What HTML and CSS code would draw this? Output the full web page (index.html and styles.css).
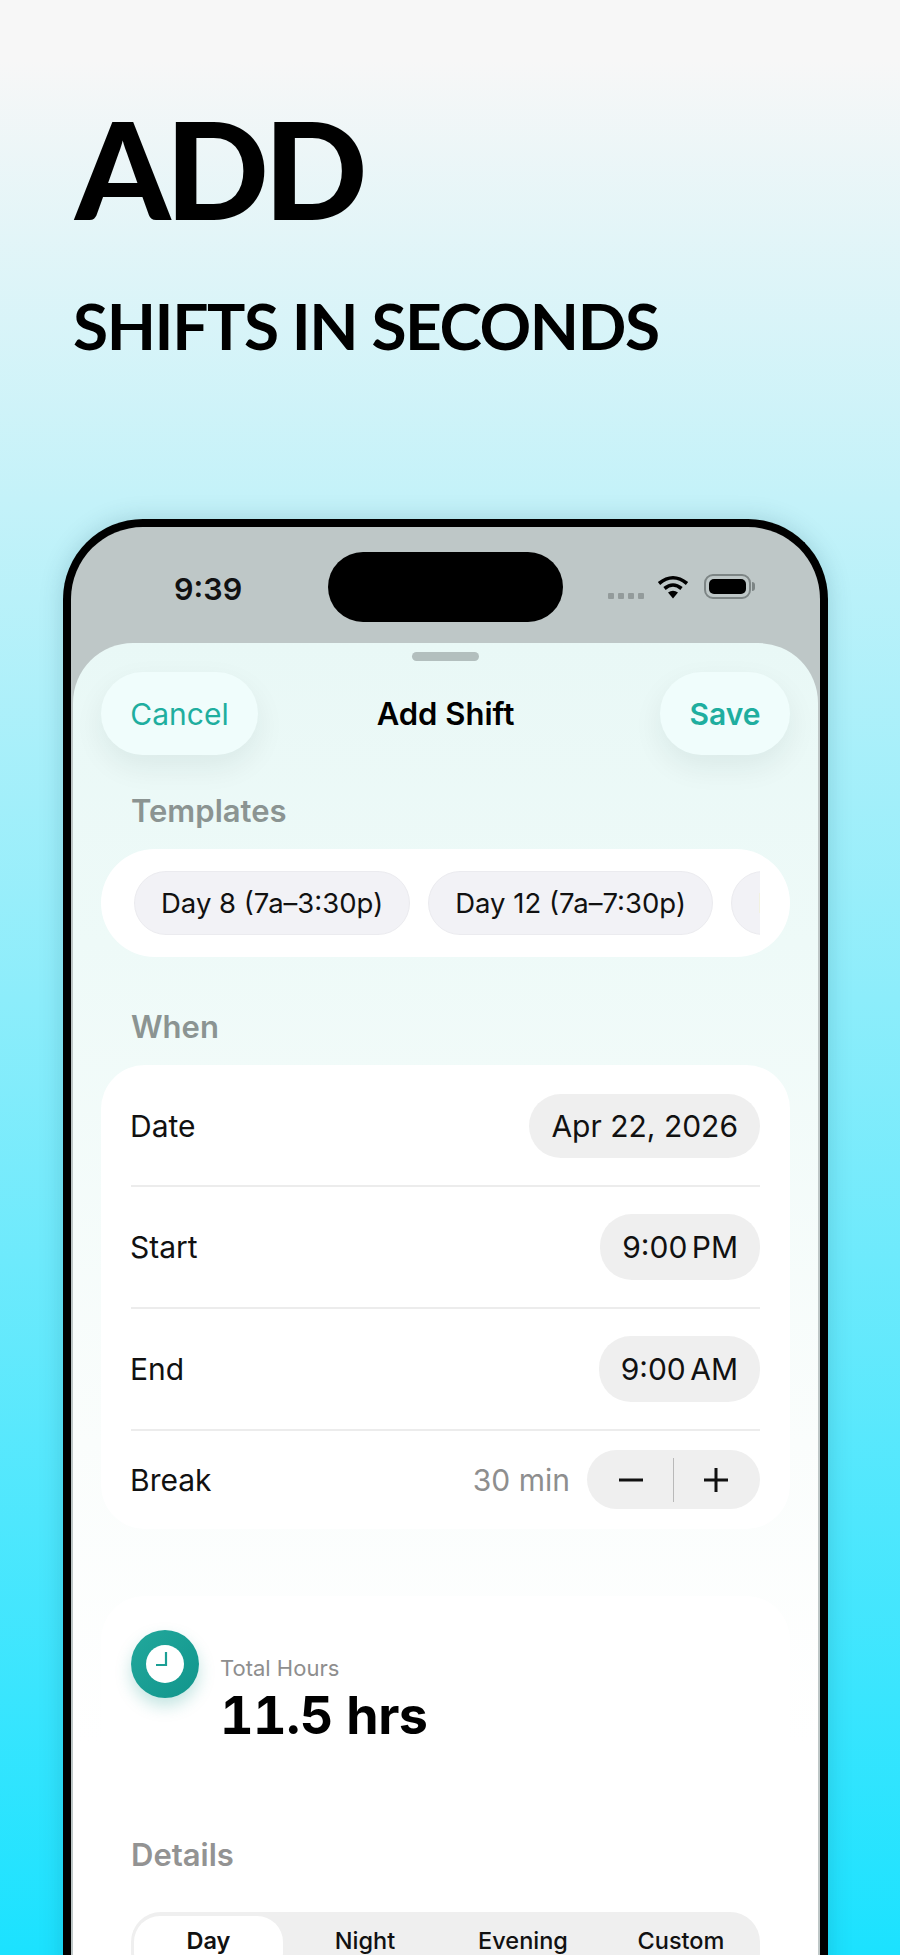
FILE: index.html
```html
<!DOCTYPE html>
<html lang="en">
<head>
  <meta charset="UTF-8" />
  <title>Add shifts in seconds</title>
  <link rel="stylesheet" href="styles.css">
</head>
<body>

  <header class="hero">
    <h1>ADD</h1>
    <h2>SHIFTS IN SECONDS</h2>
  </header>

  <div class="phone">
    <div class="status">
      <span class="time">9:39</span>
      <div class="island"></div>
      <div class="status-icons">
        <div class="dots"><i></i><i></i><i></i><i></i></div>
        <svg class="wifi" width="32" height="24" viewBox="0 0 32 24">
          <path d="M2 8.5 Q16 -3 30 8.5" fill="none" stroke="#000" stroke-width="3.6" />
          <path d="M7.5 13.5 Q16 6.5 24.5 13.5" fill="none" stroke="#000" stroke-width="3.6" />
          <path d="M11 17.6 Q16 14 21 17.6 L16 23.5 Z" fill="#000" />
        </svg>
        <div class="battery"><div class="battery-fill"></div></div>
      </div>
    </div>

    <div class="sheet">
      <div class="handle"></div>

      <nav class="nav">
        <button class="nav-btn cancel">Cancel</button>
        <div class="nav-title">Add Shift</div>
        <button class="nav-btn save">Save</button>
      </nav>

      <div class="section-label first">Templates</div>
      <div class="card templates">
        <div class="chips">
          <span class="chip">Day 8 (7a–3:30p)</span>
          <span class="chip">Day 12 (7a–7:30p)</span>
          <span class="chip">Night 12 (7p–7:30a)</span>
        </div>
      </div>

      <div class="section-label">When</div>
      <div class="card when">
        <div class="row">
          <span class="row-name">Date</span>
          <span class="pill">Apr 22, 2026</span>
        </div>
        <div class="row">
          <span class="row-name">Start</span>
          <span class="pill tall">9:00 PM</span>
        </div>
        <div class="row">
          <span class="row-name">End</span>
          <span class="pill tall">9:00 AM</span>
        </div>
        <div class="row last">
          <span class="row-name">Break</span>
          <div class="break-right">
            <span class="muted">30 min</span>
            <div class="stepper">
              <svg width="24" height="24" viewBox="0 0 24 24"><path d="M0 12H24" stroke="#111" stroke-width="3" /></svg>
              <div class="stepper-line"></div>
              <svg width="24" height="24" viewBox="0 0 24 24"><path d="M0 12H24M12 0V24" stroke="#111" stroke-width="3" /></svg>
            </div>
          </div>
        </div>
      </div>

      <div class="card total">
        <div class="clock">
          <svg width="38" height="38" viewBox="0 0 38 38">
            <circle cx="19" cy="19" r="19" fill="#fff" />
            <path d="M20 7V20H10" fill="none" stroke="#1b9f95" stroke-width="2.2" />
          </svg>
        </div>
        <div class="total-text">
          <div class="total-label">Total Hours</div>
          <div class="total-value">11.5 hrs</div>
        </div>
      </div>

      <div class="section-label details">Details</div>
      <div class="segments">
        <span class="segment active">Day</span>
        <span class="segment">Night</span>
        <span class="segment">Evening</span>
        <span class="segment">Custom</span>
      </div>
    </div>
  </div>

</body>
</html>
```

FILE: styles.css
```css
* {
  box-sizing: border-box;
}
html, body {
  margin: 0;
  height: 1955px;
  overflow: hidden;
}
body {
  font-family: Inter, "Noto Sans", sans-serif;
  color: #111;
  background: linear-gradient(180deg, #f7f7f7 0, #f7f7f7 60px, #c4f2f9 500px, #8cedfb 1000px, #1be2ff 1955px);
}

/* hero text */
.hero {
  font-family: Lato, sans-serif;
  color: #000;
  height: 519px;
  padding: 100px 0 0 73px;
}
.hero h1 {
  margin: 0 0 0 2px;
  font-size: 136px;
  line-height: 136px;
  font-weight: 900;
  letter-spacing: -5px;
}
.hero h2 {
  margin: 54px 0 0 0;
  font-size: 64px;
  line-height: 72px;
  font-weight: 700;
  letter-spacing: -1.4px;
}

/* phone frame */
.phone {
  width: 765px;
  height: 1460px;
  margin-left: 63px;
  border: 8px solid #000;
  border-bottom: none;
  border-radius: 80px 80px 0 0;
  background: #bec7c7;
  overflow: hidden;
  box-shadow: 0 0 24px rgba(0, 60, 80, 0.18);
}
.status {
  display: grid;
  grid-template-columns: 257px 235px 1fr;
  height: 116px;
  padding-top: 25px;
}
.time {
  align-self: start;
  padding: 19px 0 0 103px;
  font-size: 30.5px;
  line-height: 36px;
  font-weight: 600;
}
.island {
  height: 70px;
  background: #000;
  border-radius: 35px;
}
.status-icons {
  display: flex;
  align-items: flex-start;
  padding: 23px 0 0 45px;
}
.dots {
  display: flex;
  gap: 4px;
  margin-top: 18px;
}
.dots i {
  width: 6px;
  height: 6px;
  border-radius: 1px;
  background: #939b9b;
}
.wifi {
  margin-left: 13px;
}
.battery {
  position: relative;
  width: 47px;
  height: 25px;
  margin-left: 15px;
  margin-top: -1px;
  padding: 3px;
  border: 2px solid #7d8585;
  border-radius: 9px;
}
.battery::after {
  content: '';
  position: absolute;
  right: -6px;
  top: 6px;
  width: 3px;
  height: 9px;
  background: #7d8585;
  border-radius: 0 3px 3px 0;
}
.battery-fill {
  height: 100%;
  background: #000;
  border-radius: 5px;
}

/* sheet */
.sheet {
  height: 1320px;
  margin: 0 2px;
  padding: 9px 28px 0 28px;
  border-radius: 60px 60px 0 0;
  background: linear-gradient(180deg, #e9f8f6 0, #eefaf8 300px, #fafdfc 800px, #fff 1100px);
}
.handle {
  width: 67px;
  height: 9px;
  margin: 0 auto;
  background: #b3bfbe;
  border-radius: 5px;
}
.nav {
  display: grid;
  grid-template-columns: 1fr auto 1fr;
  align-items: center;
  margin-top: 11px;
}
.nav-btn {
  height: 83px;
  border: none;
  border-radius: 42px;
  background: #f0fdfc;
  color: #1fae9f;
  font-family: inherit;
  font-size: 30px;
  box-shadow: 0 12px 30px rgba(0, 40, 40, 0.07);
}
.cancel {
  width: 157px;
  justify-self: start;
}
.save {
  width: 130px;
  justify-self: end;
  font-weight: 600;
}
.nav-title {
  font-size: 31px;
  font-weight: 600;
  color: #000;
}
.section-label {
  margin: 0 0 0 30px;
  padding-top: 52px;
  font-size: 31px;
  line-height: 36px;
  font-weight: 600;
  color: #8b9492;
}
.section-label.first {
  padding-top: 38px;
}
.section-label.details {
  padding-top: 51px;
  color: #939393;
}
.card {
  margin-top: 20px;
  background: #fff;
  border-radius: 54px;
}
.templates {
  height: 108px;
  padding: 22px 30px 0 33px;
}
.chips {
  display: flex;
  gap: 18px;
  overflow: hidden;
}
.chip {
  flex: none;
  height: 64px;
  padding: 0 26px;
  background: #f2f2f6;
  border: 1px solid #ebebef;
  border-radius: 32px;
  font-size: 27.5px;
  line-height: 62px;
}

.when {
  height: 464px;
  padding: 29px 30px 0 30px;
  border-radius: 44px;
}
.row {
  display: flex;
  justify-content: space-between;
  align-items: center;
  padding: 0 0 27px 0;
  margin-bottom: 27px;
  border-bottom: 2px solid #ececec;
  font-size: 30px;
}
.row-name {
  margin-left: -1px;
}
.row.last {
  border-bottom: none;
  padding: 0;
  margin: -8px 0 0 0;
}
.pill {
  height: 64px;
  padding: 0 22px;
  background: #efefef;
  border-radius: 32px;
  line-height: 64px;
}
.pill.tall {
  height: 66px;
  line-height: 66px;
  word-spacing: -4px;
}
.break-right {
  display: flex;
  align-items: center;
  gap: 17px;
}
.muted {
  color: #8e8e8e;
}
.stepper {
  display: flex;
  align-items: center;
  justify-content: space-between;
  width: 173px;
  height: 59px;
  padding: 0 32px;
  background: #efefef;
  border-radius: 30px;
}
.stepper-line {
  width: 1px;
  height: 44px;
  background: #b9b9b9;
}

.total {
  display: flex;
  height: 190px;
  margin-top: 67px;
  padding: 34px 0 0 30px;
  border-radius: 44px;
  box-shadow: 0 0 30px rgba(0, 40, 40, 0.008);
}
.clock {
  display: flex;
  align-items: center;
  justify-content: center;
  width: 68px;
  height: 68px;
  border-radius: 50%;
  background: linear-gradient(135deg, #22a89c, #11958c);
  box-shadow: 0 8px 16px rgba(20, 150, 140, 0.25);
}
.total-text {
  margin: 25px 0 0 21px;
}
.total-label {
  font-size: 22px;
  line-height: 26px;
  color: #8e8e8e;
}
.total-value {
  margin-top: 4px;
  font-size: 52px;
  line-height: 62px;
  font-weight: 700;
  font-variant-numeric: tabular-nums;
  letter-spacing: -0.5px;
  color: #000;
}

.segments {
  display: grid;
  grid-template-columns: 152px 158px 158px 158px;
  height: 70px;
  margin: 39px 30px 0 30px;
  padding: 4px 0 4px 3px;
  background: #efefef;
  border-radius: 30px;
}
.segment {
  text-align: center;
  font-size: 23.5px;
  line-height: 50px;
  font-weight: 500;
}
.segment.active {
  margin-right: 3px;
  background: #fff;
  border-radius: 26px;
  font-weight: 600;
}
```
